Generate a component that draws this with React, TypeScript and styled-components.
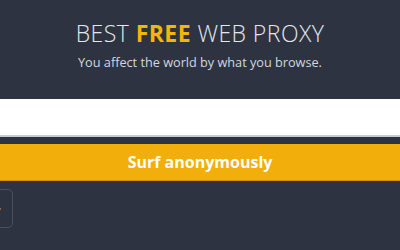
import React from "react";
import styled, { createGlobalStyle } from "styled-components";

const Global = createGlobalStyle`
  html, body { margin: 0; padding: 0; background: #2e3342; overflow: hidden; }
  body { width: 400px; height: 250px; font-family: "Open Sans", "Liberation Sans", sans-serif; }
`;

const Page = styled.div`
  width: 400px;
  height: 250px;
  background: #2e3342;
  display: flex;
  flex-direction: column;
`;

const Hero = styled.header`
  display: flex;
  flex-direction: column;
  align-items: center;
  padding-top: 17px;
`;

const Title = styled.h1`
  margin: 0;
  font-family: "Open Sans", sans-serif;
  font-weight: 300;
  font-size: 23px;
  line-height: 32px;
  color: #e4e7ec;
  letter-spacing: 0.45px;
`;

const Accent = styled.span`
  color: #f5b50a;
  font-weight: 700;
`;

const Subtitle = styled.p`
  margin: 5px 0 0;
  font-size: 12.7px;
  line-height: 16px;
  color: #d3d7de;
`;

const Form = styled.form`
  display: flex;
  flex-direction: column;
  gap: 7px;
  margin-top: 29px;
`;

const UrlInput = styled.input`
  box-sizing: border-box;
  width: 400px;
  height: 38px;
  border: none;
  border-bottom: 2px solid #c9cacd;
  background: #ffffff;
  outline: none;
  margin: 0;
  padding: 0 12px;
`;

const Submit = styled.button`
  box-sizing: border-box;
  width: 400px;
  height: 37px;
  border: none;
  border-bottom: 1px solid #d58f00;
  background: #f2ae0a;
  color: #ffffff;
  font-family: "Open Sans", sans-serif;
  font-weight: 700;
  font-size: 16px;
  padding: 0;
  margin: 0;
`;

const Below = styled.div`
  display: flex;
  margin-top: 8px;
`;

const SideTab = styled.div`
  box-sizing: border-box;
  width: 40px;
  height: 39px;
  margin-left: -27px;
  border: 1px solid #4a4f5c;
  border-radius: 5px;
  display: flex;
  align-items: center;
  justify-content: flex-end;
  padding-right: 11px;
`;

const Dot = styled.span`
  width: 2px;
  height: 2px;
  background: #c0703a;
  border-radius: 1px;
`;

export default function App() {
  return (
    <Page>
      <Global />
      <Hero>
        <Title>
          BEST <Accent>FREE</Accent> WEB PROXY
        </Title>
        <Subtitle>You affect the world by what you browse.</Subtitle>
      </Hero>
      <Form onSubmit={(e) => e.preventDefault()}>
        <UrlInput type="text" aria-label="URL" />
        <Submit type="submit">Surf anonymously</Submit>
      </Form>
      <Below>
        <SideTab>
          <Dot />
        </SideTab>
      </Below>
    </Page>
  );
}
